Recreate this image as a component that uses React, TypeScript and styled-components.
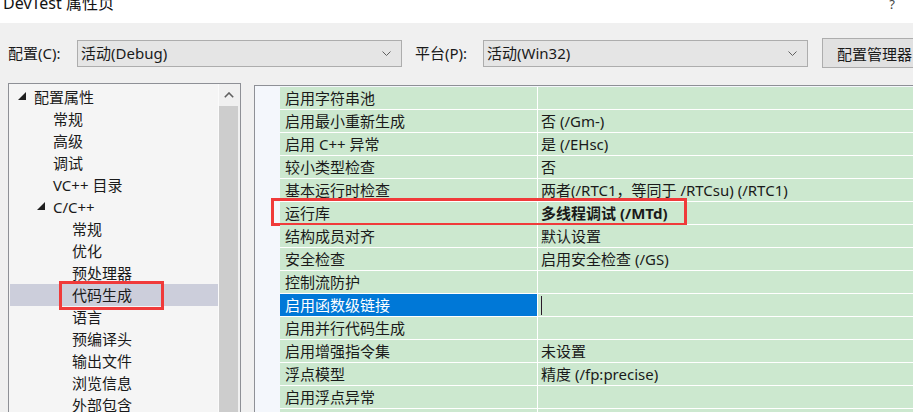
import React from "react";
import styled, { createGlobalStyle, css } from "styled-components";

const GlobalStyle = createGlobalStyle`
  html, body { margin: 0; padding: 0; background: #f0f0f0; }
  body { font-family: "Noto Sans", "Noto Sans CJK SC", sans-serif; }
  * { box-sizing: border-box; }
`;

const Window = styled.div`
  width: 913px;
  height: 412px;
  overflow: hidden;
  display: flex;
  flex-direction: column;
  background: #f0f0f0;
  color: #1a1a1a;
  font-size: 15px;
`;

const TitleBar = styled.div`
  height: 23px;
  flex: none;
  background: #ffffff;
  display: flex;
  justify-content: space-between;
  align-items: flex-start;
  padding: 0 18px 0 3px;
  overflow: hidden;
`;

const Title = styled.span`
  font-size: 16px;
  line-height: 20px;
  margin-top: -7px;
  color: #111;
`;

const Help = styled.span`
  font-size: 13px;
  line-height: 14px;
  margin-top: -3px;
  color: #444;
`;

const Toolbar = styled.div`
  height: 60px;
  flex: none;
  display: flex;
  align-items: center;
  padding-left: 8px;
`;

const Label = styled.span<{ $w: number }>`
  width: ${(p) => p.$w}px;
  flex: none;
  line-height: 20px;
  white-space: nowrap;
`;

const Combo = styled.div`
  width: 325px;
  height: 27px;
  flex: none;
  display: flex;
  align-items: center;
  justify-content: space-between;
  background: #e5e5e5;
  border: 1px solid #adadad;
  padding: 0 10px 0 3px;
  line-height: 20px;
`;

const ToolButton = styled.div<{ $ml: number }>`
  margin-left: ${(p) => p.$ml}px;
  width: 100px;
  height: 30px;
  flex: none;
  display: flex;
  align-items: center;
  padding-left: 14px;
  background: #e1e1e1;
  border: 1px solid #adadad;
  white-space: nowrap;
`;

const Main = styled.div`
  flex: 1;
  min-height: 0;
  display: flex;
  align-items: flex-start;
  padding-left: 8px;
`;

const TreeBox = styled.div`
  width: 233px;
  height: 340px;
  flex: none;
  display: flex;
  background: #f5f5f5;
  border: 1px solid #8e9096;
`;

const TreeList = styled.div`
  flex: 1;
  padding-top: 2px;
  display: flex;
  flex-direction: column;
`;

const TreeRow = styled.div<{ $level: number; $selected?: boolean }>`
  position: relative;
  height: 22px;
  flex: none;
  margin-left: 1px;
  display: flex;
  align-items: center;
  padding-left: ${(p) => 8 + p.$level * 19}px;
  line-height: 20px;
  white-space: nowrap;
  ${(p) =>
    p.$selected &&
    css`
      background: #cccedb;
    `}
`;

const Expander = styled.span`
  width: 16px;
  flex: none;
  display: flex;
  align-items: center;
  margin-top: -2px;
`;

const ScrollBar = styled.div`
  width: 22px;
  flex: none;
  display: flex;
  flex-direction: column;
  background: #f0f0f0;
  border-left: 1px solid #fbfbfb;
  padding-right: 2px;
`;

const ScrollArrow = styled.div`
  height: 22px;
  flex: none;
  display: flex;
  align-items: center;
  justify-content: center;
`;

const ScrollThumb = styled.div`
  flex: 1;
  background: #cdcdcd;
`;

const GridPanel = styled.div`
  flex: 1;
  height: 340px;
  margin: 2px 0 0 13px;
  background: #f4f7fc;
  border-left: 1px solid #8e9096;
  border-top: 1px solid #8e9096;
  padding: 1px 0 0 25px;
  display: flex;
  flex-direction: column;
`;

const GridRow = styled.div<{ $selected?: boolean }>`
  position: relative;
  height: 23px;
  flex: none;
  display: grid;
  grid-template-columns: 258px 1fr;
  border-bottom: 1px solid #ffffff;
  ${(p) =>
    p.$selected &&
    css`
      border-bottom-width: 2px;
      height: 24px;
      margin-bottom: -1px;
    `}
`;

const NameCell = styled.div<{ $selected?: boolean }>`
  background: ${(p) => (p.$selected ? "#0078d7" : "#cce8cf")};
  color: ${(p) => (p.$selected ? "#ffffff" : "#1a1a1a")};
  border-right: 1px solid #ffffff;
  padding-left: 5px;
  line-height: 22px;
  white-space: nowrap;
  overflow: hidden;
`;

const ValueCell = styled.div<{ $bold?: boolean }>`
  background: #cce8cf;
  padding-left: 3px;
  line-height: 22px;
  white-space: nowrap;
  font-weight: ${(p) => (p.$bold ? 700 : 400)};
  display: flex;
  align-items: center;
`;

const Caret = styled.span`
  width: 1px;
  height: 19px;
  background: #2a1a2a;
`;

const Highlight = styled.div<{ $l: number; $t: number; $w: number; $h: number }>`
  position: absolute;
  left: ${(p) => p.$l}px;
  top: ${(p) => p.$t}px;
  width: ${(p) => p.$w}px;
  height: ${(p) => p.$h}px;
  border: 3px solid #f03a3a;
  pointer-events: none;
`;

const Triangle = () => (
  <svg width="8" height="8" viewBox="0 0 8 8">
    <polygon points="8,0 8,8 0,8" fill="#1e1e1e" />
  </svg>
);

const Chevron = () => (
  <svg width="9" height="5" viewBox="0 0 9 5">
    <polyline points="0.5,0.5 4.5,4.5 8.5,0.5" fill="none" stroke="#606060" strokeWidth="1" />
  </svg>
);

const UpChevron = () => (
  <svg width="10" height="6" viewBox="0 0 10 6">
    <polyline points="0.8,5.2 5,1 9.2,5.2" fill="none" stroke="#606060" strokeWidth="1.6" />
  </svg>
);

type TreeItem = { label: string; level: number; expanded?: boolean; selected?: boolean };

const treeItems: TreeItem[] = [
  { label: "配置属性", level: 0, expanded: true },
  { label: "常规", level: 1 },
  { label: "高级", level: 1 },
  { label: "调试", level: 1 },
  { label: "VC++ 目录", level: 1 },
  { label: "C/C++", level: 1, expanded: true },
  { label: "常规", level: 2 },
  { label: "优化", level: 2 },
  { label: "预处理器", level: 2 },
  { label: "代码生成", level: 2, selected: true },
  { label: "语言", level: 2 },
  { label: "预编译头", level: 2 },
  { label: "输出文件", level: 2 },
  { label: "浏览信息", level: 2 },
  { label: "外部包含", level: 2 },
  { label: "高级", level: 2 },
];

type Prop = { name: string; value: string; bold?: boolean; selected?: boolean; boxed?: boolean };

const props: Prop[] = [
  { name: "启用字符串池", value: "" },
  { name: "启用最小重新生成", value: "否 (/Gm-)" },
  { name: "启用 C++ 异常", value: "是 (/EHsc)" },
  { name: "较小类型检查", value: "否" },
  { name: "基本运行时检查", value: "两者(/RTC1，等同于 /RTCsu) (/RTC1)" },
  { name: "运行库", value: "多线程调试 (/MTd)", bold: true, boxed: true },
  { name: "结构成员对齐", value: "默认设置" },
  { name: "安全检查", value: "启用安全检查 (/GS)" },
  { name: "控制流防护", value: "" },
  { name: "启用函数级链接", value: "", selected: true },
  { name: "启用并行代码生成", value: "" },
  { name: "启用增强指令集", value: "未设置" },
  { name: "浮点模型", value: "精度 (/fp:precise)" },
  { name: "启用浮点异常", value: "" },
  { name: "创建可热修补映像", value: "" },
];

export default function App() {
  return (
    <>
      <GlobalStyle />
      <Window>
        <TitleBar>
          <Title>DevTest 属性页</Title>
          <Help>?</Help>
        </TitleBar>
        <Toolbar>
          <Label $w={69}>配置(C):</Label>
          <Combo>
            <span>活动(Debug)</span>
            <Chevron />
          </Combo>
          <Label $w={68} style={{ marginLeft: 13 }}>
            平台(P):
          </Label>
          <Combo>
            <span>活动(Win32)</span>
            <Chevron />
          </Combo>
          <ToolButton $ml={14}>配置管理器</ToolButton>
        </Toolbar>
        <Main>
          <TreeBox>
            <TreeList>
              {treeItems.map((it, i) => (
                <TreeRow key={i} $level={it.level} $selected={it.selected}>
                  <Expander>{it.expanded ? <Triangle /> : null}</Expander>
                  <span>{it.label}</span>
                  {it.selected && <Highlight $l={49} $t={-3} $w={105} $h={29} />}
                </TreeRow>
              ))}
            </TreeList>
            <ScrollBar>
              <ScrollArrow>
                <UpChevron />
              </ScrollArrow>
              <ScrollThumb />
            </ScrollBar>
          </TreeBox>
          <GridPanel>
            {props.map((p, i) => (
              <GridRow key={i} $selected={p.selected}>
                <NameCell $selected={p.selected}>{p.name}</NameCell>
                <ValueCell $bold={p.bold}>
                  {p.selected ? <Caret /> : p.value}
                </ValueCell>
                {p.boxed && <Highlight $l={-9} $t={-4} $w={416} $h={28} />}
              </GridRow>
            ))}
          </GridPanel>
        </Main>
      </Window>
    </>
  );
}
